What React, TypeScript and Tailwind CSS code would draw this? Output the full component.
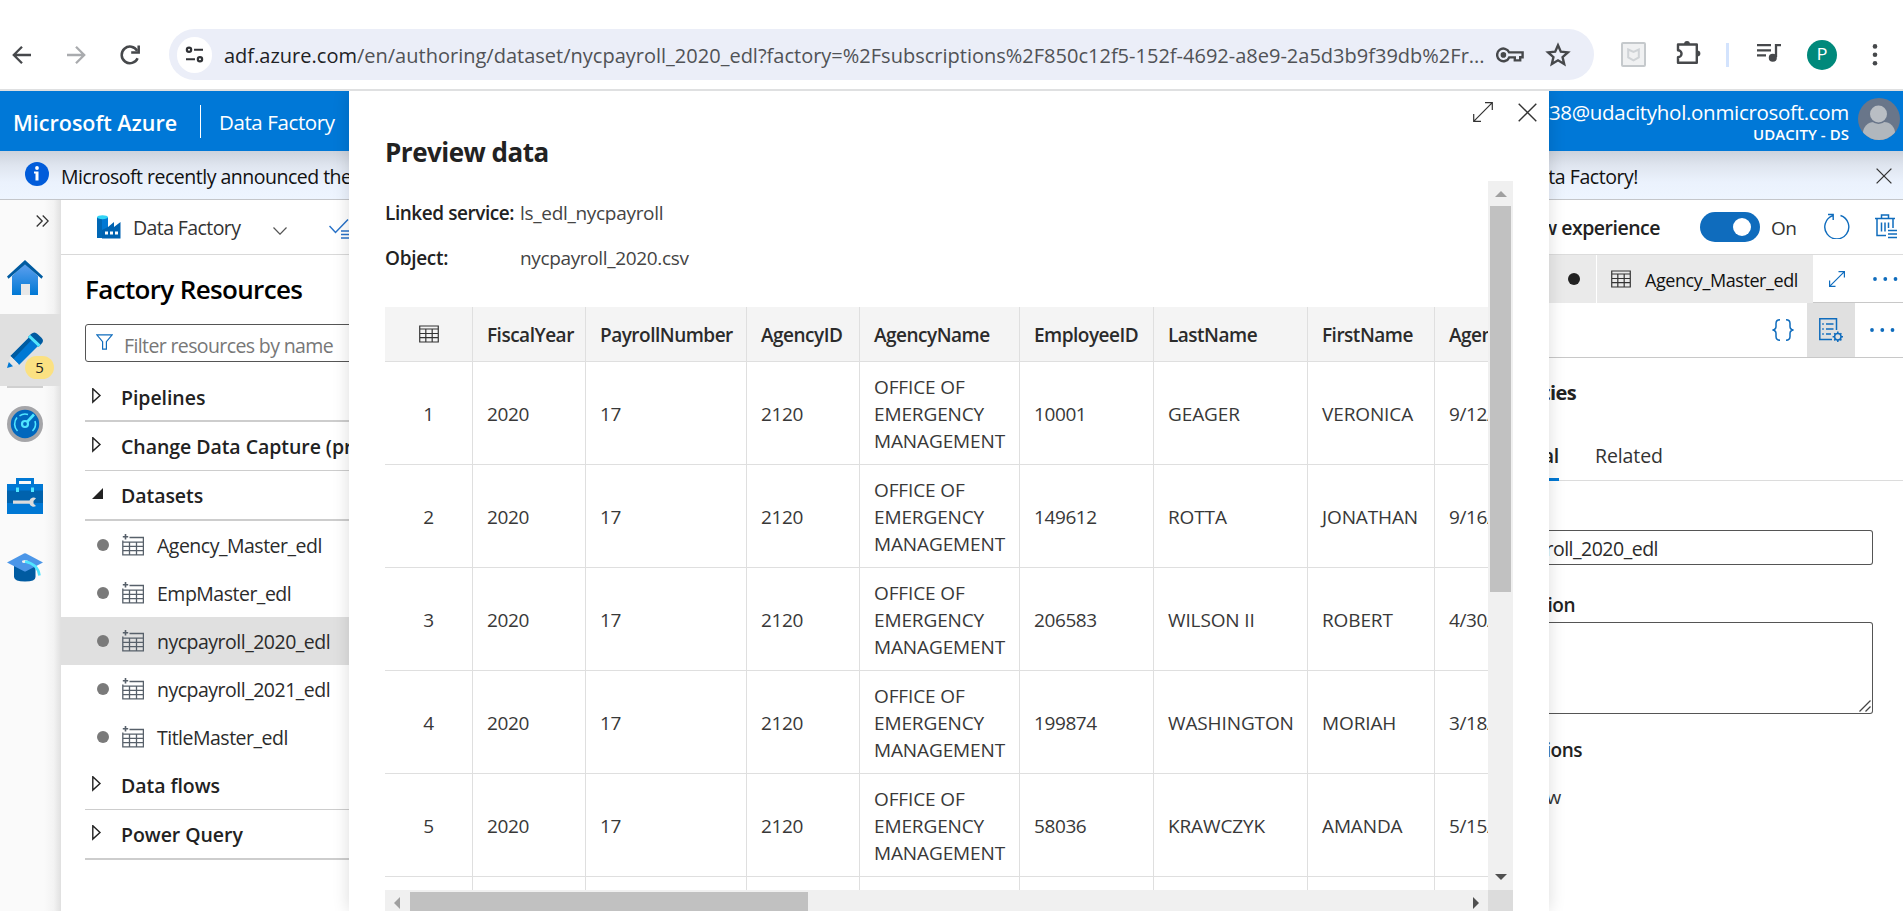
import React from "react";

const T = ({ c, children }: { c: string; children: React.ReactNode }) => (
  <span className={"block whitespace-nowrap leading-none translate-y-px " + c}>{children}</span>
);

const GridIcon = ({ c = "", plus = false }: { c?: string; plus?: boolean }) => (
  <svg className={"shrink-0 " + c} viewBox="0 0 22 22" preserveAspectRatio="none" fill="none" stroke="currentColor" strokeWidth="1.3">
    {plus ? (
      <>
        <path d="M7.5 3.5H21.4V20.8H.8V6.5M.8 8.2H21.4M.8 12.3H21.4M.8 16.6H21.4M7.5 8.2V20.8M14.5 8.2V20.8" />
        <path d="M3.5 0V5.4M.8 2.7H6.2" strokeWidth="1.6" />
      </>
    ) : (
      <path d="M.8 1.3H21.2V20.7H.8ZM.8 5H21.2M.8 10.3H21.2M.8 15.4H21.2M7.5 5V20.7M14.5 5V20.7" />
    )}
  </svg>
);

const rows = [
  ["1", "10001", "GEAGER", "VERONICA", "9/12/2016"],
  ["2", "149612", "ROTTA", "JONATHAN", "9/16/2013"],
  ["3", "206583", "WILSON II", "ROBERT", "4/30/2018"],
  ["4", "199874", "WASHINGTON", "MORIAH", "3/18/2019"],
  ["5", "58036", "KRAWCZYK", "AMANDA", "5/15/2017"],
  ["6", "", "", "", ""],
];

const cols = "grid grid-cols-[88px_113px_161px_113px_160px_134px_154px_127px_160px] w-[1210px]";
const cell = "flex items-center border-r border-b border-[#dfdfdf] pl-[14px] pt-[2px]";
const word = cell + " tracking-[-0.12px]";

function Chrome() {
  return (
    <div className="h-[91px] w-full flex items-start pt-[29px] border-b-2 border-[#dfe0e1] bg-white shrink-0">
      <div className="flex items-center h-[51px] w-[169px] shrink-0 pl-[12px] text-[#46484b]">
        <svg className="w-[20px] h-[20px]" viewBox="0 0 20 20" fill="none" stroke="currentColor" strokeWidth="2.3"><path d="M19 10H2.5M10 1.8 1.8 10 10 18.2" /></svg>
        <svg className="w-[20px] h-[20px] ml-[34px] text-[#a9abae]" viewBox="0 0 20 20" fill="none" stroke="currentColor" strokeWidth="2.3"><path d="M1 10H17.5M10 1.8 18.2 10 10 18.2" /></svg>
        <svg className="w-[22px] h-[22px] ml-[33px]" viewBox="0 0 22 22" fill="none" stroke="currentColor" strokeWidth="2.5"><path d="M18.6 14.2A8.3 8.3 0 1 1 18.2 6.8" /><path d="M19.7 1.5V8.6H12.2" /></svg>
      </div>
      <div className="w-[1425px] h-[51px] shrink-0 rounded-full bg-[#ebeef8] flex items-center pl-[8px]">
        <div className="w-[35px] h-[36px] rounded-full bg-white flex items-center justify-center">
          <svg className="w-[19px] h-[17px]" viewBox="0 0 20 18" fill="none" stroke="#303236" strokeWidth="2.3"><circle cx="4.2" cy="4" r="2.3" /><path d="M9.5 4H19M1 14H10.5" /><circle cx="15.8" cy="14" r="2.3" /></svg>
        </div>
        <div className="ml-[12px] w-[1263px]"><T c="text-[20px] tracking-[0.005px] text-[#505256]"><span className="text-[#202124]">adf.azure.com</span>/en/authoring/dataset/nycpayroll_2020_edl?factory=%2Fsubscriptions%2F850c12f5-152f-4692-a8e9-2a5d3b9f39db%2Fr...</T></div>
        <svg className="w-[28px] h-[18px] ml-[9px] shrink-0" viewBox="0 0 28 18" fill="none" stroke="#46484b" strokeWidth="2.4"><path d="M13.2 6.4H26.6V11.3H24.2V14.4H18.8V11.4H13.2A6.3 6.3 0 1 1 13.2 6.4Z" /><circle cx="7.4" cy="8.9" r="1.6" fill="#46484b" /></svg>
        <svg className="w-[26px] h-[26px] ml-[21px] shrink-0" viewBox="0 0 24 24" fill="none" stroke="#46484b" strokeWidth="2.2"><path d="m12 3 2.6 6 6.5.6-4.9 4.3 1.5 6.4-5.7-3.4-5.7 3.4 1.5-6.4L2.9 9.600 9.400 9Z" /></svg>
      </div>
      <div className="flex items-center h-[51px] pl-[27px]">
        <div className="w-[25px] h-[25px] border-2 border-[#c5c9cc] bg-[#f0f1f2] flex items-center justify-center rounded-[2px]">
          <svg className="w-[13px] h-[14px]" viewBox="0 0 13 14" fill="none" stroke="#cfd3d6" strokeWidth="2"><path d="M1.2 1.500 6.500 4 11.800 1.500V9.500L6.500 12.300 1.200 9.500Z" /></svg>
        </div>
        <svg className="w-[27px] h-[27px] ml-[29px] -mt-1" viewBox="0 0 27 27" fill="none" stroke="#46484b" strokeWidth="2.4"><path d="M3 5.500H21.800V23.800H3V18.300A3.400 3.400 0 0 0 3 11.200Z" strokeLinejoin="round" /><path d="M9 5.500a3 3.400 0 0 1 6 0ZM22 11.600a3.400 3 0 0 1 0 6Z" fill="#46484b" stroke="none" /></svg>
        <div className="w-[3px] h-[24px] bg-[#d3e3fd] ml-[24px]" />
        <svg className="w-[24px] h-[19px] ml-[28px] -mt-1" viewBox="0 0 24 19" fill="none" stroke="#46484b" strokeWidth="2.3"><path d="M0 2.200H14M0 7.300H14M0 12.300H9M24 2.200H19V14" /><circle cx="15.800" cy="14.800" r="2.900" fill="#46484b" /></svg>
        <div className="w-[30px] h-[30px] rounded-full bg-[#00897b] text-white flex items-center justify-center ml-[26px] mt-px"><span className="font-['Roboto'] text-[16px] leading-none">P</span></div>
        <svg className="w-[6px] h-[22px] ml-[35px]" viewBox="0 0 6 22" fill="#46484b"><circle cx="3" cy="2.400" r="2.300" /><circle cx="3" cy="10.800" r="2.300" /><circle cx="3" cy="19.200" r="2.300" /></svg>
      </div>
    </div>
  );
}

function Rail() {
  return (
    <div className="w-[61px] shrink-0 bg-[linear-gradient(to_right,#fafafa_72%,#f3f3f3_88%,#e0e0e0)] flex flex-col">
      <div className="h-[114px] flex flex-col">
        <svg className="w-[13px] h-[12px] ml-[36px] mt-[15px]" viewBox="0 0 13 12" fill="none" stroke="#333" strokeWidth="1.3"><path d="M.7.5 6.2 6 .7 11.5M6.7.5 12.2 6 6.7 11.5" /></svg>
        <svg className="w-[36px] h-[36px] ml-[7px] mt-[33px]" viewBox="0 0 36 36"><defs><linearGradient id="hm" x2="0" y2="1"><stop stopColor="#5ea0ef" /><stop offset="1" stopColor="#0078d4" /></linearGradient></defs><path d="M5 16 18 4 31 16V35H5Z" fill="url(#hm)" /><path d="M14 24h9v11h-9z" fill="#e8e8e8" /><path d="M0 16.5 18 0 36 16.5 34.5 18.8 18 4.6 1.5 18.8Z" fill="#005ba1" /></svg>
      </div>
      <div className="h-[72px] bg-[#e0e0e0] relative">
        <svg className="w-[36px] h-[36px] ml-[7px] mt-[18px]" viewBox="0 0 36 36"><path d="M3.5 24 22.5 5 31.5 13.5 12 33Z" fill="#0078d4" /><path d="M3.5 24 22.5 5 25 7.5 6.5 27Z" fill="#005ba1" /><path d="M24 2q3.500-3 6.500 0l4 3.700q3 3 0 6L31.500 15 21 5Z" fill="#005ba1" /><path d="m21 5 2-2.200 10.600 10L31.500 15Z" fill="#50e6ff" /><path d="M3.500 24 12 32.500 0 36Z" fill="#e6e6e6" /><path d="M1.800 30 6 34.300 0 36Z" fill="#0078d4" /></svg>
        <div className="absolute left-[25px] top-[42px] w-[29px] h-[23px] rounded-full bg-[#fbe182] flex items-center justify-center text-[15px] leading-none text-[#222]">5</div>
      </div>
      <div className="w-[36px] h-[2px] bg-[#d0d0d0] ml-[7px]" />
      <svg className="w-[36px] h-[36px] ml-[7px] mt-[18px]" viewBox="0 0 36 36" fill="none"><circle cx="18" cy="18" r="18" fill="#a5a5a8" /><circle cx="18" cy="18" r="14.200" fill="#0067bd" /><path d="M10.500 25A10 10 0 0 1 10 11.500M25.500 25A10 10 0 0 0 28 15M12.500 9.800A10 10 0 0 1 21 8.500" stroke="#50e6ff" strokeWidth="1.600" /><circle cx="18" cy="18" r="3" stroke="#50e6ff" strokeWidth="2.200" /><path d="M20 16 27 8.500" stroke="#50e6ff" strokeWidth="2.600" /></svg>
      <svg className="w-[36px] h-[36px] ml-[7px] mt-[36px]" viewBox="0 0 36 36"><path d="M10.500 7V1.500H25.500V7" fill="none" stroke="#0078d4" strokeWidth="3" /><path d="M0 6H36V36H0Z" fill="#0078d4" /><path d="M0 12.500H36V25H0Z" fill="#0062ad" /><path d="M9 9.500h3v4.500H9zM24 9.500h3v4.500h-3z" fill="#50e6ff" /><path d="M6 22.500H22.500A4.400 4.400 0 0 1 29 20.300L26.500 23V25.500L29 28A4.400 4.400 0 0 1 22.500 25.800H6Z" fill="#dcdcdc" /></svg>
      <svg className="w-[36px] h-[29px] ml-[7px] mt-[39px]" viewBox="0 0 36 29"><path d="M7 12H28.500V24Q28.500 28.500 18 28.500T7 24Z" fill="#005ba1" /><path d="M0 9.500 17 .4Q18 0 19 .4L36 9.500 19 18.200Q18 18.600 17 18.200Z" fill="#4b96e8" /><ellipse cx="18" cy="8.500" rx="3" ry="1.500" fill="#eee" /><path d="M18 8.500Q31 11 32.500 22.500" fill="none" stroke="#50e6ff" strokeWidth="2.600" /></svg>
    </div>
  );
}

const Section = ({ label, open = false, h }: { label: string; open?: boolean; h: string }) => (
  <div className={"ml-[24px] border-[#cdcdcd] flex items-center " + h}>
    <svg className="w-[12px] h-[16px] ml-[7px] -mt-[2px] shrink-0" viewBox="0 0 12 16">
      {open ? <path d="M11 2V13H0Z" fill="#222" /> : <path d="M.8.700V14.100L8 7.400Z" fill="none" stroke="#222" strokeWidth="1.400" />}
    </svg>
    <T c="ml-[17px] text-[19.5px] font-semibold tracking-[-0.05px] text-[#222]">{label}</T>
  </div>
);

function Resources() {
  const items = ["Agency_Master_edl", "EmpMaster_edl", "nycpayroll_2020_edl", "nycpayroll_2021_edl", "TitleMaster_edl"];
  return (
    <div className="w-[288px] shrink-0 overflow-hidden bg-white flex flex-col">
      <div className="h-[55px] shrink-0 border-b border-[#d9d9d9] flex items-center pl-[36px]">
        <svg className="w-[24px] h-[24px] shrink-0" viewBox="0 0 24 24"><path d="M0 2H11V23H0Z" fill="#0067b5" /><path d="M5 2H11V23H5Z" fill="#0078d4" /><ellipse cx="5.500" cy="2.200" rx="5.500" ry="2" fill="#32d4f5" /><path d="M5 15 11 12 17 7V12L23.500 7V23.500H5Z" fill="#0063b1" /><path d="M8 16.500h3v3H8zM13 16.500h3v3h-3zM18 16.500h3v3h-3z" fill="#fff" /></svg>
        <T c="ml-[12px] w-[108px] text-[19.5px] tracking-[-0.6px] text-[#333] pb-[1px]">Data Factory</T>
        <svg className="w-[14px] h-[8px] ml-[33px] mt-[7px] shrink-0" viewBox="0 0 14 8" fill="none" stroke="#555" strokeWidth="1.200"><path d="M.5.500 7 7.200 13.500.500" /></svg>
        <svg className="w-[24px] h-[20px] ml-[42px] mt-[3px] shrink-0" viewBox="0 0 24 20" fill="none" stroke="#2872c8" strokeWidth="1.500"><path d="M.5 7 6.500 13.500 19 .500M12 12H24M12 15.500H24M12 19H24" /></svg>
      </div>
      <T c="mt-[20px] ml-[24px] text-[26px] font-semibold tracking-[-0.65px] text-black">Factory Resources</T>
      <div className="mt-[23px] ml-[24px] w-[300px] h-[38px] shrink-0 border border-[#555] rounded-[3px] flex items-center pl-[10px]">
        <svg className="w-[17px] h-[16px] -mt-[3px] shrink-0" viewBox="0 0 17 16" fill="none" stroke="#0f6cbd" strokeWidth="1.200"><path d="M.8.800H16.200L10.400 7.600V15.200H6.600V7.600Z" /></svg>
        <T c="ml-[11px] text-[19.5px] tracking-[-0.62px] text-[#777] pt-[3px]">Filter resources by name</T>
      </div>
      <Section label="Pipelines" h="mt-[11px] h-[49px] border-b-2" />
      <Section label="Change Data Capture (preview)" h="h-[49px] border-b" />
      <Section label="Datasets" open h="h-[50px] border-b-2" />
      {items.map((t, i) => (
        <div key={t} className={"h-[48px] shrink-0 flex items-center pl-[36px] " + (i === 2 ? "bg-[#e0e0e0]" : "")}>
          <div className="w-[12px] h-[12px] rounded-full bg-[#7a7a7a]" />
          <GridIcon plus c="w-[22px] h-[22px] ml-[13px] text-[#57606a]" />
          <T c="ml-[13px] text-[19.5px] tracking-[-0.5px] text-[#2b2b2b]">{t}</T>
        </div>
      ))}
      <Section label="Data flows" h="h-[49px] border-b" />
      <Section label="Power Query" h="h-[50px] border-b-2" />
    </div>
  );
}

const Dots = ({ c }: { c: string }) => (
  <svg className={"w-[25px] h-[4px] shrink-0 " + c} viewBox="0 0 25 4" fill="#0f6cbd"><circle cx="2" cy="2" r="1.900" /><circle cx="12.300" cy="2" r="1.900" /><circle cx="22.500" cy="2" r="1.900" /></svg>
);

function Right() {
  return (
    <div className="w-[354px] shrink-0 bg-white overflow-hidden flex flex-col">
      <div className="h-[55px] shrink-0 border-b border-[#dcdcdc] flex items-center">
        <div className="w-[111px] flex justify-end"><T c="text-[19.5px] font-semibold tracking-[-0.5px] text-[#222]">Preview experience</T></div>
        <div className="w-[60px] h-[30px] rounded-full bg-[#0f6cbd] ml-[40px] flex items-center justify-end pr-[9px]"><div className="w-[18px] h-[18px] rounded-full bg-white" /></div>
        <T c="ml-[11px] w-[26px] text-[19px] tracking-[-0.6px] text-[#333]">On</T>
        <svg className="w-[26px] h-[26px] ml-[27px] -mt-[2px]" viewBox="0 0 26 26" fill="none" stroke="#0f6cbd" strokeWidth="1.400"><path d="M8.800 2.600A12 12 0 1 0 16.500 2.500M4 1.500H9.200V7" /></svg>
        <svg className="w-[23px] h-[25px] ml-[25px] -mt-[2px]" viewBox="0 0 23 25" fill="none" stroke="#0f6cbd" strokeWidth="1.500"><path d="M0 4.500H20M6.500 4.500V1H13.500V4.500M2 4.500V21.500H11M18 4.500V14M6.500 8.500V17.500M10 8.500V17.500M13.500 8.500V14M13 16.500H22M13 20H22M13 23.500H22" /></svg>
      </div>
      <div className="h-[48px] shrink-0 flex">
        <div className="w-[47px] bg-[#eaeaea] flex items-center pl-[19px]"><div className="w-[12px] h-[12px] rounded-full bg-[#222]" /></div>
        <div className="w-px bg-white" />
        <div className="w-[216px] bg-[#eaeaea] flex items-center pl-[14px]">
          <GridIcon c="w-[20px] h-[18px] text-[#333]" />
          <T c="ml-[14px] text-[18px] tracking-[-0.42px] text-[#111]">Agency_Master_edl</T>
        </div>
        <div className="w-[90px] border-b border-[#c8c8c8] flex items-center">
          <svg className="w-[16px] h-[16px] ml-[16px]" viewBox="0 0 16 16" fill="none" stroke="#0f6cbd" strokeWidth="1.200"><path d="M.6 15.400 15.400.600M9.500.600H15.400V6.500M.6 9.500V15.400H6.500" /></svg>
          <Dots c="ml-[28px]" />
        </div>
      </div>
      <div className="h-[55px] shrink-0 border-b border-[#c8c8c8] flex">
        <div className="w-[258px] flex items-center justify-end pr-[13px]">
          <svg className="w-[22px] h-[22px]" viewBox="0 0 22 22" fill="none" stroke="#0f6cbd" strokeWidth="1.500"><path d="M8 .800Q4 .800 4 4.500V7.500Q4 10.500.500 11Q4 11.500 4 14.500V17.500Q4 21.200 8 21.200M14 .800Q18 .800 18 4.500V7.500Q18 10.500 21.500 11Q18 11.500 18 14.500V17.500Q18 21.200 14 21.200" /></svg>
        </div>
        <div className="w-[48px] bg-[#e0e0e0] flex items-center justify-center">
          <svg className="w-[24px] h-[24px]" viewBox="0 0 24 24" fill="none" stroke="#0f6cbd" strokeWidth="1.500"><path d="M13 21.500H.8V.800H17.500V12M7 6H14.500M7 11H14.500M7 16H12M3.200 6H4.800M3.200 11H4.800M3.200 16H4.800" /><circle cx="18.800" cy="18.800" r="3.200" /><path d="M18.800 13.600V15.500M18.800 22V24M13.600 18.800H15.500M22 18.800H24M15.200 15.200 16.500 16.500M21.100 21.100 22.400 22.400M22.400 15.200 21.100 16.500M16.500 21.100 15.200 22.400" /></svg>
        </div>
        <div className="flex items-center"><Dots c="ml-[15px]" /></div>
      </div>
      <div className="w-[27px] flex justify-end mt-[24px]"><T c="text-[20px] font-bold tracking-[-0.6px] text-[#222]">Properties</T></div>
      <div className="mt-[35px] h-[44px] shrink-0 border-b border-[#dcdcdc] flex items-stretch">
        <div className="w-[10px] shrink-0 flex justify-end border-b-[3px] border-[#0078d4] -mb-px"><T c="text-[19.5px] font-semibold tracking-[-0.3px] text-[#222] pt-[8px]">General</T></div>
        <T c="ml-[36px] text-[19.5px] tracking-[-0.1px] text-[#333] pt-[8px]">Related</T>
      </div>
      <div className="mt-[49px] w-[324px] h-[35px] shrink-0 border border-l-0 border-[#555] rounded-r-[3px] flex items-center"><div className="w-[109px] flex justify-end"><T c="text-[19.5px] tracking-[-0.5px] text-[#2b2b2b]">nycpayroll_2020_edl</T></div></div>
      <div className="mt-[30px] w-[26px] flex justify-end"><T c="text-[19px] font-semibold tracking-[-0.5px] text-[#222]">Description</T></div>
      <div className="mt-[8px] w-[324px] h-[92px] shrink-0 border border-l-0 border-[#555] rounded-r-[3px] flex items-end justify-end p-[1px]"><svg className="w-[12px] h-[12px]" viewBox="0 0 12 12" stroke="#444" strokeWidth="1.300"><path d="M.5 11.500 11.500.500M6.500 11.500 11.500 6.500" /></svg></div>
      <div className="mt-[26px] w-[33px] flex justify-end"><T c="text-[19px] font-semibold tracking-[-0.5px] text-[#222]">Annotations</T></div>
      <div className="mt-[28px] w-[12px] flex justify-end"><T c="text-[19px] tracking-[-0.3px] text-[#333]">New</T></div>
    </div>
  );
}

function Modal() {
  return (
    <div className="absolute left-[349px] top-[91px] w-[1200px] h-[820px] bg-white shadow-[0_0_16px_rgba(0,0,0,0.14)] flex flex-col overflow-hidden [clip-path:inset(0_-30px_0_-30px)]">
      <div className="h-[90px] shrink-0 flex items-start">
        <T c="ml-[36px] mt-[47px] w-[1089px] text-[26px] font-bold tracking-[-0.5px] text-[#222]">Preview data</T>
        <svg className="w-[20px] h-[20px] mt-[11px] -ml-[1px]" viewBox="0 0 20 20" fill="none" stroke="#333" strokeWidth="1.200"><path d="M.7 19.300 19.300.700M12 .700H19.300V8M.7 12V19.300H8" /></svg>
        <svg className="w-[19px] h-[19px] mt-[12px] ml-[25px]" viewBox="0 0 19 19" fill="none" stroke="#333" strokeWidth="1.400"><path d="M.7.700 18.300 18.300M18.300.700.7 18.300" /></svg>
      </div>
      <div className="flex ml-[36px] w-[1128px] h-[730px]">
        <div className="w-[1103px] h-full flex flex-col overflow-hidden">
          <div className="h-[709px] shrink-0 overflow-hidden">
            <div className="grid grid-cols-[135px_1fr] pt-[22px] h-[126px] auto-rows-[45px] text-[#222]">
              <T c="text-[19px] font-semibold tracking-[-0.45px]">Linked service:</T>
              <T c="text-[19px] tracking-[-0.3px] text-[#444]">ls_edl_nycpayroll</T>
              <T c="text-[19px] font-semibold tracking-[-0.3px]">Object:</T>
              <T c="text-[19px] tracking-[-0.35px] text-[#444]">nycpayroll_2020.csv</T>
            </div>
            <div className={cols + " h-[55px] bg-[#f4f4f4] text-[19px] font-semibold tracking-[-0.5px] text-[#2b2b2b]"}>
              <div className="flex items-center justify-center border-r border-b border-[#dfdfdf]"><GridIcon c="w-[20px] h-[18px] text-[#333]" /></div>
              {["FiscalYear", "PayrollNumber", "AgencyID", "AgencyName", "EmployeeID", "LastName", "FirstName", "AgencyStartDate"].map((h) => (
                <div key={h} className={cell}>{h}</div>
              ))}
            </div>
            {rows.map((r) => (
              <div key={r[0]} className={cols + " h-[103px] text-[19px] leading-[27px] tracking-[-0.4px] text-[#383838]"}>
                <div className="flex items-center justify-center border-r border-b border-[#dfdfdf] pt-[2px]">{r[0]}</div>
                <div className={cell}>2020</div>
                <div className={cell}>17</div>
                <div className={cell}>2120</div>
                <div className={word}><span>OFFICE OF<br />EMERGENCY<br />MANAGEMENT</span></div>
                <div className={cell}>{r[1]}</div>
                <div className={word}>{r[2]}</div>
                <div className={word}>{r[3]}</div>
                <div className={cell}>{r[4]}</div>
              </div>
            ))}
          </div>
          <div className="h-[21px] shrink-0 bg-[#f0f0f0] flex items-center">
            <svg className="w-[6px] h-[12px] ml-[9px] mt-[4px]" viewBox="0 0 6 12" fill="#a0a0a0"><path d="M6 0V12L0 6Z" /></svg>
            <div className="w-[398px] h-[19px] bg-[#c1c1c1] ml-[10px] self-end" />
            <svg className="w-[6px] h-[12px] ml-[665px] mt-[4px]" viewBox="0 0 6 12" fill="#505050"><path d="M0 0V12L6 6Z" /></svg>
          </div>
        </div>
        <div className="w-[25px] h-full bg-[#f0f0f0] flex flex-col items-center">
          <svg className="w-[12px] h-[6px] mt-[10px] shrink-0" viewBox="0 0 12 6" fill="#a0a0a0"><path d="M0 6H12L6 0Z" /></svg>
          <div className="w-[21px] h-[386px] mt-[9px] bg-[#c1c1c1] shrink-0" />
          <svg className="w-[12px] h-[6px] mt-[282px] shrink-0" viewBox="0 0 12 6" fill="#505050"><path d="M0 0H12L6 6Z" /></svg>
          <div className="mt-auto h-[21px] w-full bg-[#dcdcdc]" />
        </div>
      </div>
    </div>
  );
}

export default function App() {
  return (
    <div className="relative w-[1903px] h-[911px] overflow-hidden bg-white flex flex-col font-['Open_Sans','Noto_Sans',sans-serif]">
      <Chrome />
      <div className="h-[60px] shrink-0 bg-[#0078d7] flex items-center text-white">
        <T c="ml-[13px] w-[150px] text-[21.5px] font-semibold tracking-[0px] pt-px">Microsoft Azure</T>
        <div className="w-px h-[33px] bg-white ml-[37px]" />
        <T c="ml-[18px] text-[20.5px] tracking-[-0.4px]">Data Factory</T>
        <div className="ml-auto flex flex-col items-end pr-[4px]">
          <T c="text-[20.5px] tracking-[-0.3px]">user_238@udacityhol.onmicrosoft.com</T>
          <T c="text-[15px] font-semibold mt-[5px] tracking-[0.05px]">UDACITY - DS</T>
        </div>
        <svg className="w-[42px] h-[42px] ml-[5px] mr-[3px] -mt-[4px]" viewBox="0 0 42 42"><defs><clipPath id="av"><circle cx="21" cy="21" r="21" /></clipPath></defs><g clipPath="url(#av)"><path d="M0 0H42V42H0Z" fill="#69768a" /><rect x="5" y="24" width="32" height="26" rx="11" fill="#b1b7bd" /><circle cx="20.500" cy="16" r="10" fill="#69768a" /><circle cx="20.500" cy="16" r="8.500" fill="#b9bec4" /></g></svg>
      </div>
      <div className="h-[49px] shrink-0 border-b border-[#c4c6ca] bg-[linear-gradient(to_bottom,#ccd2dc,#dfe5ef_30%,#ebf2fd_65%,#eef5ff)] flex items-center justify-between">
        <div className="flex items-center">
          <svg className="w-[24px] h-[24px] ml-[25px] -mt-[2px]" viewBox="0 0 24 24"><circle cx="12" cy="12" r="12" fill="#015cda" /><circle cx="12" cy="6" r="1.900" fill="#fff" /><path d="M9 9.500H13.500V18.500H10.500V11.500H9Z" fill="#fff" /></svg>
          <T c="ml-[12px] text-[19.5px] tracking-[-0.5px] text-[#111] pt-[2px]">Microsoft recently announced the general</T>
        </div>
        <div className="flex items-center w-[354px]">
          <div className="w-[89px] flex justify-end"><T c="text-[19.5px] tracking-[-0.45px] text-[#111] pt-[2px]">in Data Factory!</T></div>
          <svg className="w-[16px] h-[16px] ml-auto mr-[11px] mt-[2px]" viewBox="0 0 16 16" fill="none" stroke="#333" strokeWidth="1.300"><path d="M.6.600 15.400 15.400M15.400.600.6 15.400" /></svg>
        </div>
      </div>
      <div className="h-[711px] flex shrink-0">
        <Rail />
        <Resources />
        <div className="w-[1200px] shrink-0" />
        <Right />
      </div>
      <Modal />
    </div>
  );
}
